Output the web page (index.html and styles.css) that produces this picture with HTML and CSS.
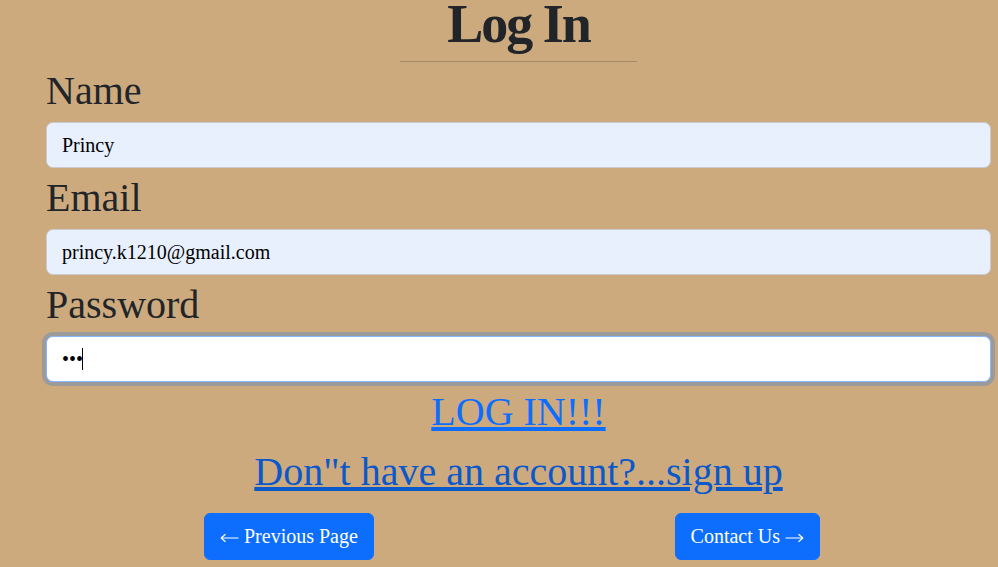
FILE: index.html
```html
<!DOCTYPE html>
<html lang="en">
<head>
<meta charset="utf-8">
<title>Log In</title>
<link rel="stylesheet" href="styles.css">
</head>
<body>
<main class="page">
  <h1 class="title">Log In</h1>
  <hr class="rule">
  <form class="form">
    <label class="label" for="name">Name</label>
    <input class="field autofill" id="name" type="text" value="Princy">
    <label class="label" for="email">Email</label>
    <input class="field autofill" id="email" type="email" value="princy.k1210@gmail.com">
    <label class="label" for="password">Password</label>
    <div class="field-wrap">
      <input class="field focused" id="password" type="password" value="abc">
      <span class="caret"></span>
    </div>
  </form>
  <a class="link" href="#">LOG IN!!!</a>
  <a class="link visited" href="#">Don"t have an account?...sign up</a>
  <div class="nav">
    <a class="btn" href="#"><svg class="arrow" width="19" height="10" viewBox="0 0 19 10" aria-hidden="true"><path d="M1 5H18.5M1 5L5.5 1.2M1 5L5.5 8.8" fill="none" stroke="#fff" stroke-width="1.2"/></svg> Previous Page</a>
    <a class="btn" href="#">Contact Us <svg class="arrow" width="19" height="10" viewBox="0 0 19 10" aria-hidden="true"><path d="M0.5 5H18M18 5L13.5 1.2M18 5L13.5 8.8" fill="none" stroke="#fff" stroke-width="1.2"/></svg></a>
  </div>
</main>
</body>
</html>
```

FILE: styles.css
```css
* { box-sizing: border-box; }

html, body {
  margin: 0;
  padding: 0;
  background: #cdaa7d;
  height: 100%;
  overflow: hidden;
}

body {
  font-family: "Liberation Serif", "Times New Roman", serif;
  color: #212529;
}

.page {
  padding: 2px 7px 0 46px;
  display: flex;
  flex-direction: column;
}

.title {
  margin: 0;
  text-align: center;
  font-size: 54px;
  line-height: 45px;
  font-weight: 700;
  letter-spacing: -2px;
}

.rule {
  width: 25%;
  margin: 14px auto 0;
  border: 0;
  border-top: 1px solid rgba(33, 37, 41, 0.25);
  height: 0;
}

.form {
  display: flex;
  flex-direction: column;
  margin-top: 7px;
}

.label {
  font-size: 40px;
  line-height: 44px;
  margin-bottom: 9px;
}

.field {
  display: block;
  width: 100%;
  height: 46px;
  margin: 0 0 8px;
  padding: 0 15px;
  font-family: "Liberation Serif", "Times New Roman", serif;
  font-size: 20px;
  color: #000;
  border: 1px solid #c9cbd0;
  border-radius: 7px;
  outline: none;
}

.autofill { background: #e8f0fe; }

.field-wrap {
  position: relative;
}

.focused {
  background: #fff;
  border-color: #86b7fe;
  box-shadow: 0 0 0 4px rgba(13, 110, 253, 0.25);
  margin-bottom: 0;
}

.caret {
  position: absolute;
  left: 36px;
  top: 12px;
  width: 1px;
  height: 22px;
  background: #000;
}

.link {
  align-self: center;
  font-size: 40px;
  line-height: 60px;
  color: #0d6efd;
  text-decoration: underline;
}

.link.visited { color: #0a58ca; }

.nav {
  display: flex;
  justify-content: space-between;
  padding: 0 171px 0 158px;
  margin-top: 11px;
}

.btn {
  display: inline-block;
  padding: 8px 15px;
  font-size: 20px;
  line-height: 29px;
  color: #fff;
  background: #0d6efd;
  border: 1px solid #0d6efd;
  border-radius: 6px;
  text-decoration: none;
}

.arrow {
  display: inline-block;
  vertical-align: 0;
}
```
